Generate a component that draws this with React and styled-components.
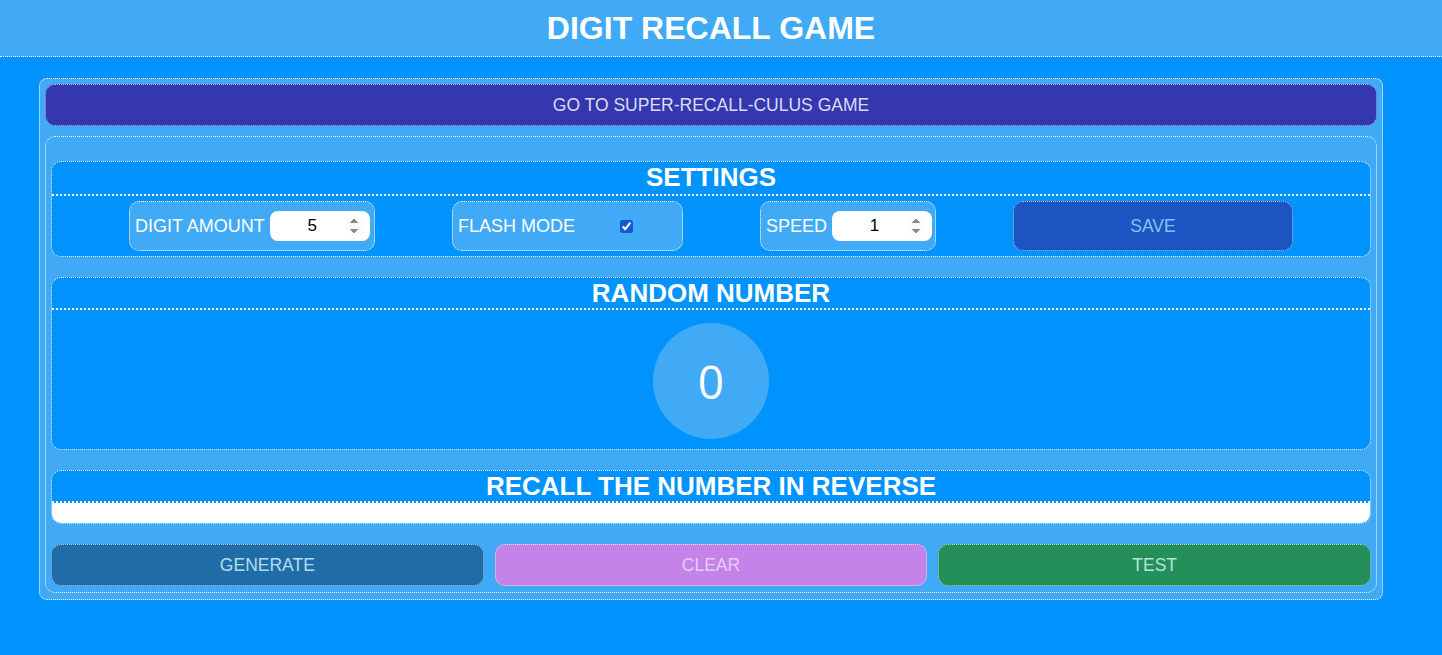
import React, { useState } from 'react';
import styled, { createGlobalStyle } from 'styled-components';

const GlobalStyle = createGlobalStyle`
  body {
    margin: 0;
    background: #0093fe;
    font-family: "Liberation Sans", Arial, sans-serif;
    color: #ffffff;
  }
`;

const Header = styled.header`
  height: 56px;
  padding-right: 20px;
  border-bottom: 1px dotted #ffffff;
  background: #40aaf7;
  display: flex;
  align-items: center;
  justify-content: center;
`;

const Title = styled.h1`
  margin: 0;
  font-size: 32px;
  font-weight: 700;
  color: #ffffff;
`;

const Main = styled.main`
  padding: 21px 59px 0 39px;
`;

const Outer = styled.div`
  display: flex;
  flex-direction: column;
  gap: 10px;
  padding: 5px 5px 6px;
  background: #40aaf7;
  border: 1px dotted #ffffff;
  border-radius: 8px;
`;

const Button = styled.button`
  height: 42px;
  border: 1px dotted rgba(255, 255, 255, 0.7);
  border-radius: 10px;
  background: ${(p) => p.$bg};
  color: ${(p) => p.$color};
  font-family: inherit;
  font-size: 17.5px;
  text-transform: uppercase;
  cursor: pointer;
`;

const Inner = styled.div`
  display: flex;
  flex-direction: column;
  gap: 20px;
  padding: 24px 5px 6px;
  background: #40aaf7;
  border: 1px dotted #ffffff;
  border-radius: 10px;
`;

const Panel = styled.section`
  background: #0093fe;
  border: 1px dotted #ffffff;
  border-radius: 10px;
  overflow: hidden;
`;

const PanelTitle = styled.h2`
  margin: 0;
  height: ${(p) => p.$h || 30}px;
  line-height: 31px;
  border-bottom: 2px dotted #ffffff;
  font-size: 26px;
  font-weight: 700;
  text-align: center;
  text-transform: uppercase;
`;

const SettingsRow = styled.div`
  display: flex;
  justify-content: space-evenly;
  align-items: center;
  padding: 5px 0 5px;
`;

const Field = styled.label`
  display: flex;
  align-items: center;
  gap: 5px;
  box-sizing: border-box;
  width: ${(p) => p.$w}px;
  height: 50px;
  padding: 0 5px;
  background: #40aaf7;
  border: 1px dotted #ffffff;
  border-radius: 10px;
  font-size: 18px;
  text-transform: uppercase;
  white-space: nowrap;
`;

const NumberInput = styled.input`
  box-sizing: border-box;
  flex: 0 0 100px;
  width: 100px;
  height: 30px;
  padding: 0 8px;
  border: none;
  border-radius: 8px;
  background: #ffffff;
  font-family: inherit;
  font-size: 17px;
  text-align: center;
  color: #000000;
  outline: none;

  &::-webkit-inner-spin-button {
    opacity: 1;
  }
`;

const Check = styled.input`
  margin: 0 44px 0 auto;
  width: 13px;
  height: 13px;
  accent-color: #1558d6;
`;

const SaveButton = styled(Button)`
  width: 280px;
  height: 50px;
  background: #1c55c1;
  color: #84c2f6;
`;

const Circle = styled.div`
  width: 116px;
  height: 116px;
  margin: 13px auto 10px;
  border-radius: 50%;
  background: #40aaf7;
  display: flex;
  align-items: center;
  justify-content: center;
  font-size: 46px;
  font-family: "Open Sans", "Liberation Sans", sans-serif;
  font-weight: 400;
`;

const AnswerInput = styled.input`
  display: block;
  box-sizing: border-box;
  width: 100%;
  height: 20px;
  border: none;
  background: #ffffff;
  outline: none;
`;

const Actions = styled.div`
  display: grid;
  grid-template-columns: repeat(3, 1fr);
  gap: 11px;
`;

export default function App() {
  const [digits, setDigits] = useState(5);
  const [speed, setSpeed] = useState(1);
  const [flash, setFlash] = useState(true);

  return (
    <>
      <GlobalStyle />
      <Header>
        <Title>DIGIT RECALL GAME</Title>
      </Header>
      <Main>
        <Outer>
          <Button $bg="#3437ae" $color="#dcdcf6">
            Go to Super-Recall-Culus Game
          </Button>
          <Inner>
            <Panel>
              <PanelTitle $h={32}>Settings</PanelTitle>
              <SettingsRow>
                <Field $w={246}>
                  Digit amount
                  <NumberInput
                    type="number"
                    value={digits}
                    onChange={(e) => setDigits(e.target.value)}
                  />
                </Field>
                <Field $w={231}>
                  Flash mode
                  <Check
                    type="checkbox"
                    checked={flash}
                    onChange={(e) => setFlash(e.target.checked)}
                  />
                </Field>
                <Field $w={176}>
                  Speed
                  <NumberInput
                    type="number"
                    value={speed}
                    onChange={(e) => setSpeed(e.target.value)}
                  />
                </Field>
                <SaveButton>Save</SaveButton>
              </SettingsRow>
            </Panel>
            <Panel>
              <PanelTitle>Random number</PanelTitle>
              <Circle>0</Circle>
            </Panel>
            <Panel>
              <PanelTitle>Recall the number in reverse</PanelTitle>
              <AnswerInput type="text" />
            </Panel>
            <Actions>
              <Button $bg="#1f6ca6" $color="#b4dcf2">Generate</Button>
              <Button $bg="#c383e8" $color="#e4ccf8">Clear</Button>
              <Button $bg="#258f5b" $color="#b4e2dc">Test</Button>
            </Actions>
          </Inner>
        </Outer>
      </Main>
    </>
  );
}
